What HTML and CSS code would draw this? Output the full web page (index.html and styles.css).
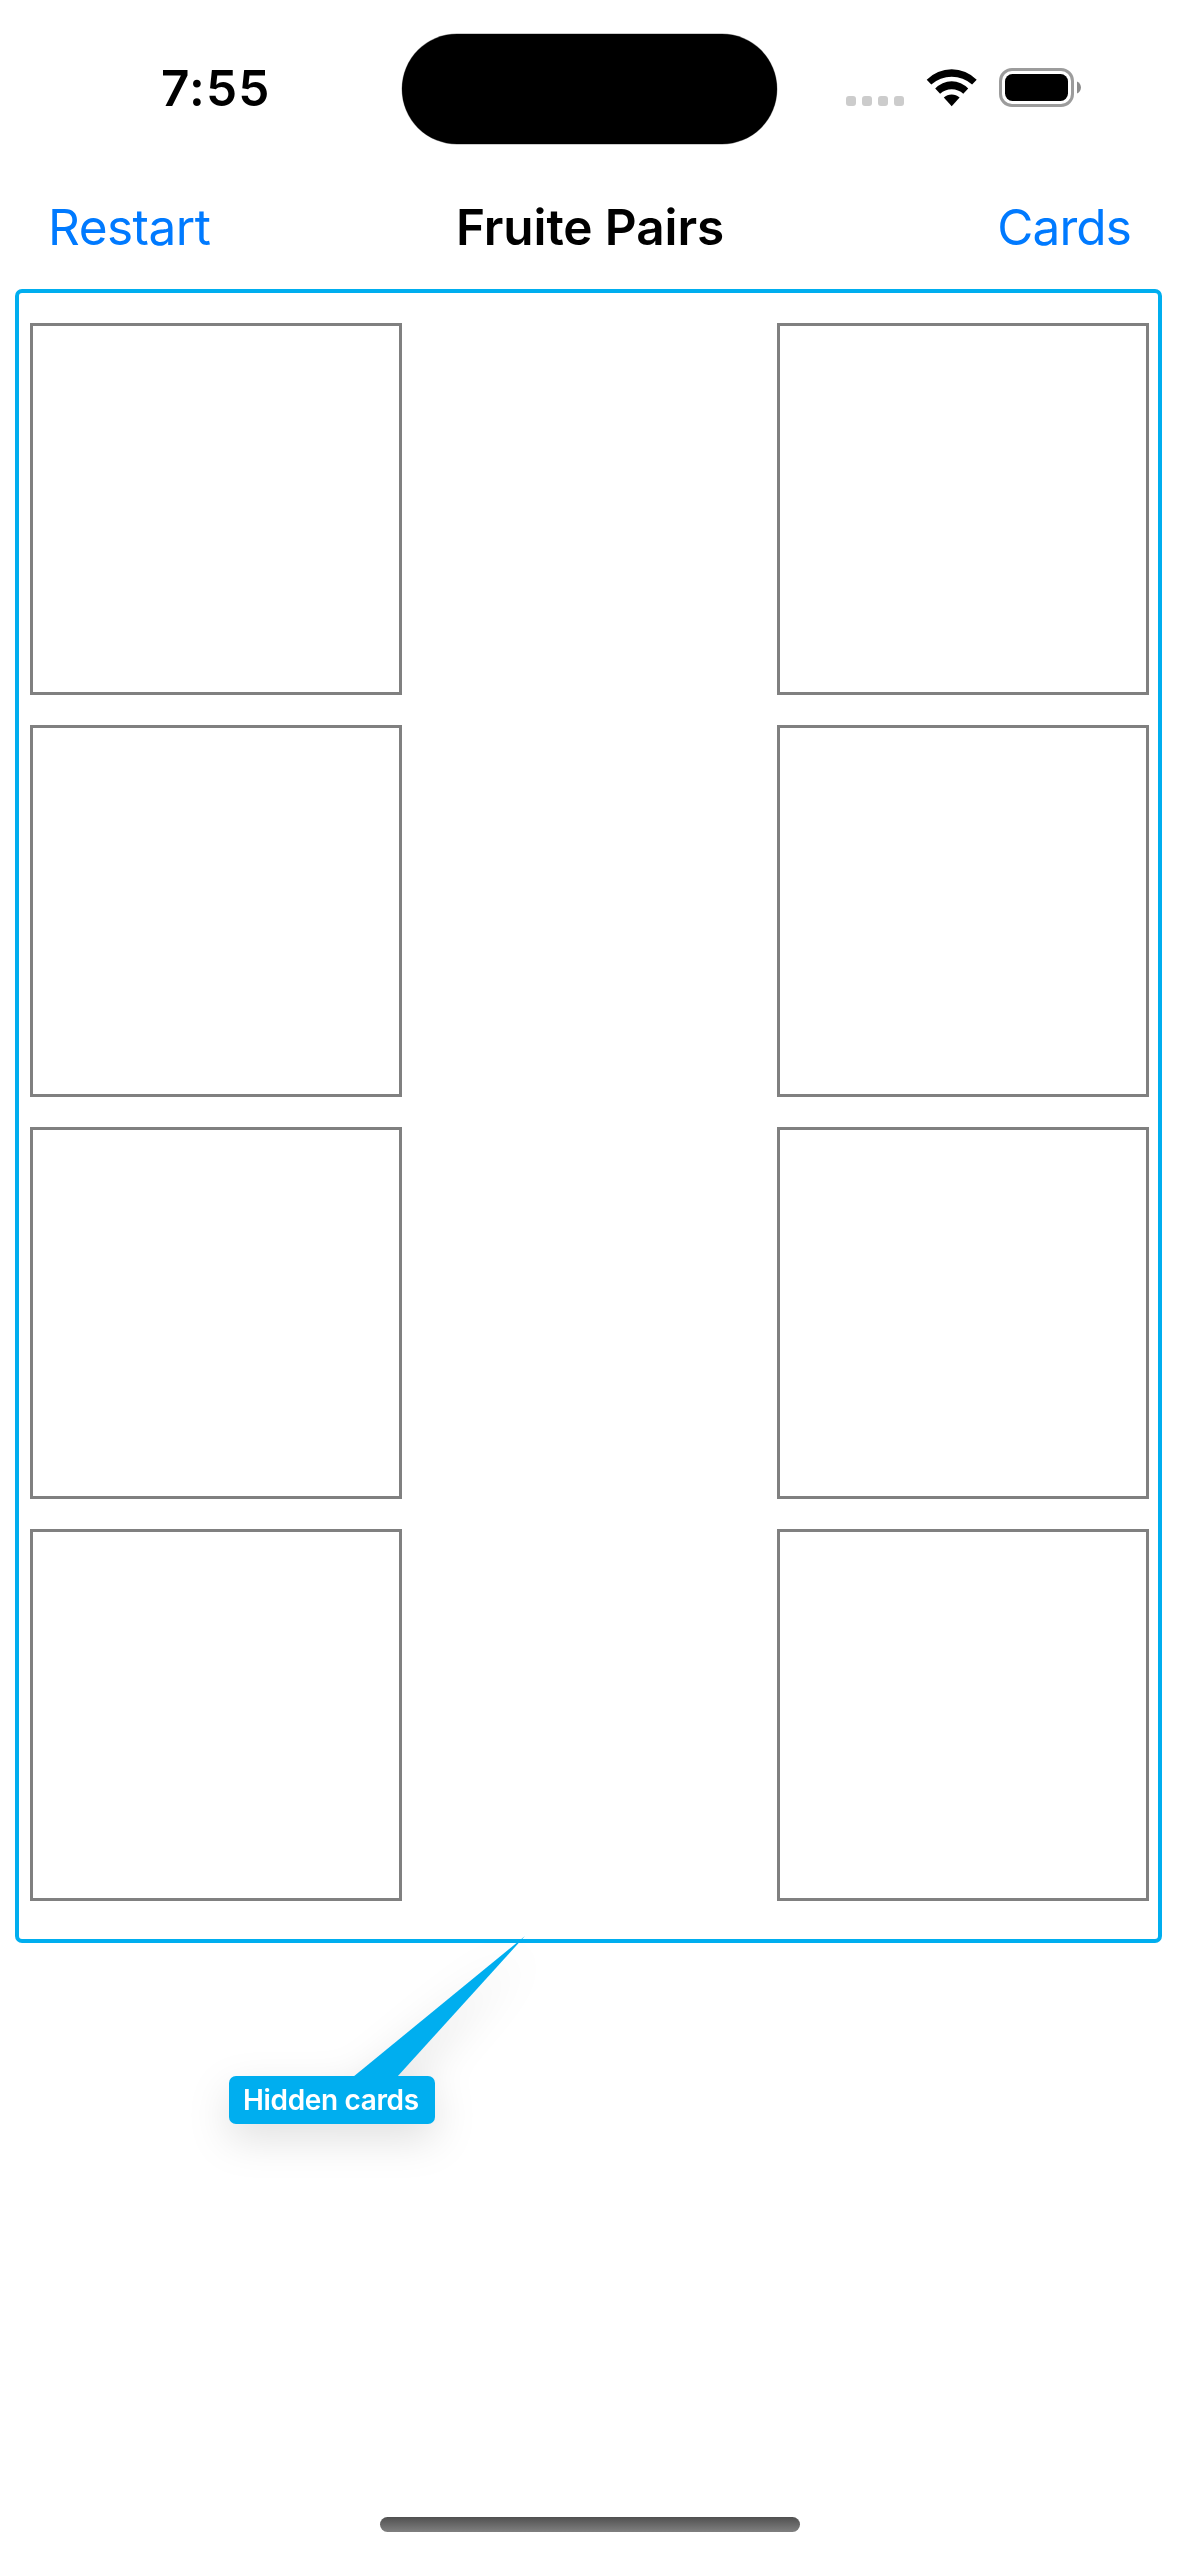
FILE: index.html
```html
<!DOCTYPE html>
<html lang="en">
<head>
<meta charset="utf-8">
<title>Fruite Pairs</title>
<link rel="stylesheet" href="styles.css">
</head>
<body>
<div class="phone">
  <header class="status">
    <div class="time">7:55</div>
    <div class="island"></div>
    <div class="indicators">
      <div class="signal"><i></i><i></i><i></i><i></i></div>
      <svg class="wifi" width="52" height="40" viewBox="0 0 52 40">
        <path d="M.7 11.8A35 35 0 0 1 50.7 11.8L46.1 16.6A30.6 30.6 0 0 0 5.3 16.6Z"/>
        <path d="M9.2 20.6A22.3 22.3 0 0 1 42.2 20.6L37.3 25.7A17 17 0 0 0 14.1 25.7Z"/>
        <path d="M17.8 29.6A11.5 11.5 0 0 1 33.6 29.6L25.7 38.2Z"/>
      </svg>
      <svg class="battery" width="83" height="39" viewBox="0 0 83 39">
        <rect x="1.5" y="1.5" width="72" height="36" rx="11.5" fill="none" stroke="#9c9c9c" stroke-width="3"/>
        <rect x="6" y="6" width="63" height="27" rx="7.5"/>
        <path d="M78 13.5C83.3 15.5 83.3 23.500 78 25.500Z" fill="#8c8c8c"/>
      </svg>
    </div>
  </header>
  <nav class="navbar">
    <a class="action restart">Restart</a>
    <h1 class="title">Fruite Pairs</h1>
    <a class="action cards">Cards</a>
  </nav>
  <main class="board">
    <div class="card"></div><div class="card"></div>
    <div class="card"></div><div class="card"></div>
    <div class="card"></div><div class="card"></div>
    <div class="card"></div><div class="card"></div>
    <div class="callout">
      <svg class="tail" width="172" height="141" viewBox="0 0 172 141"><path d="M0 141L172 0L44 141Z"/></svg>
      <span class="label">Hidden cards</span>
    </div>
  </main>
  <footer class="home"><div class="home-bar"></div></footer>
</div>
</body>
</html>
```
FILE: styles.css
```css
* { box-sizing: border-box; }
body { margin: 0; background: #fff; font-family: Inter, "Liberation Sans", sans-serif; color: #000; }
.phone { width: 1179px; height: 2556px; display: flex; flex-direction: column; overflow: hidden; }

.status { height: 177px; padding: 33px 98px 0 161px; display: flex; align-items: flex-start; justify-content: space-between; }
.time { width: 241px; font-size: 49.5px; line-height: 60px; font-weight: 600; letter-spacing: 1.2px; padding-top: 25px; white-space: nowrap; }
.island { width: 375px; height: 110px; margin-top: 1px; border-radius: 55px; background: #000; box-shadow: 0 0 0 .4px rgba(0, 0, 0, .4); }
.indicators { width: 304px; padding-top: 35px; display: flex; justify-content: flex-end; align-items: flex-start; }
.signal { display: flex; gap: 6px; margin: 28px 22px 0 0; }
.signal i { width: 10px; height: 10px; border-radius: 3px; background: #ccc; }
.wifi { margin-right: 21px; }
.battery { margin-right: -1px; }

.navbar { height: 112px; padding: 20px 48px 0; display: grid; grid-template-columns: 1fr auto 1fr; align-items: start; line-height: 60px; white-space: nowrap; }
.action { color: #007aff; font-size: 49.5px; }
.restart { letter-spacing: -.5px; }
.cards { text-align: right; letter-spacing: -.9px; }
.title { margin: 0; font-size: 49.5px; font-weight: 600; letter-spacing: -.1px; transform: translateX(.5px); }

.board { position: relative; width: 1147px; height: 1654px; margin-left: 15px; padding: 30px 9px 38px 11px; border: 4px solid #00aeef; border-radius: 7px; display: grid; grid-template-columns: 372px 372px; grid-auto-rows: 372px; row-gap: 30px; justify-content: space-between; }
.card { border: 3px solid #808080; }

.callout { position: absolute; left: 210px; top: 1643px; display: flex; flex-direction: column; align-items: flex-start; filter: drop-shadow(0 15px 20px rgba(0, 0, 0, .12)); }
.tail { display: block; margin: 0 0 -1px 124px; fill: #00aeef; }
.label { width: 206px; height: 48px; padding-left: 14px; border-radius: 7px; background: #00aeef; color: #fff; font-size: 28px; line-height: 48px; font-weight: 600; letter-spacing: -.35px; white-space: nowrap; }

.home { margin-top: auto; padding: 0 0 24px 1px; display: flex; justify-content: center; }
.home-bar { width: 420px; height: 15px; border-radius: 8px; background: linear-gradient(#505050, #808080); }
```
